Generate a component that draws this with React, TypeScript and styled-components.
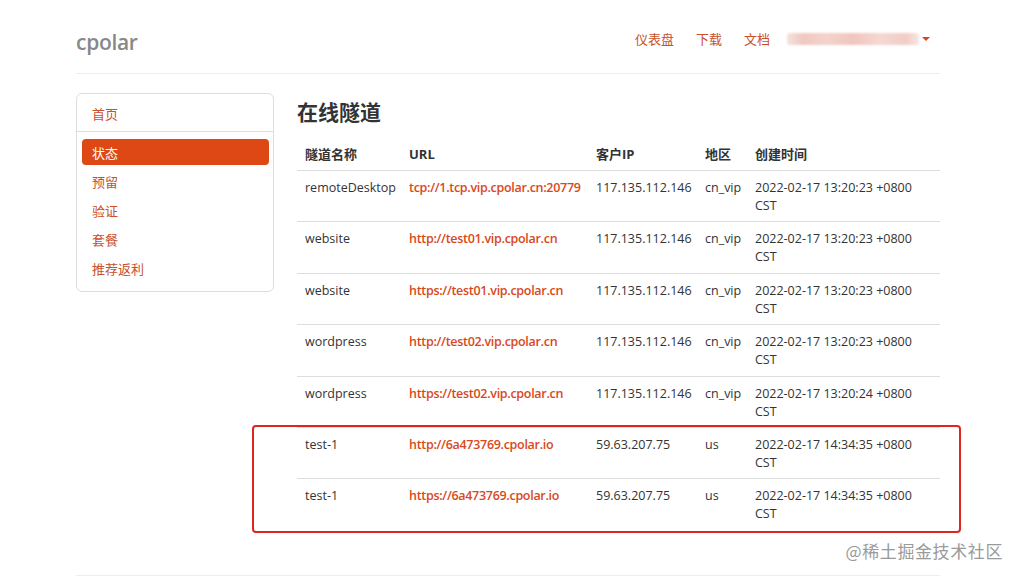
import React from "react";
import styled, { createGlobalStyle } from "styled-components";

const Global = createGlobalStyle`
  html, body { margin: 0; padding: 0; background: #fff; }
  body { font-family: "Open Sans", "Noto Sans CJK SC", sans-serif; color: #333; font-size: 13px; }
  * { box-sizing: border-box; }
`;

const Page = styled.div`
  position: relative;
  width: 1023px;
  height: 579px;
  overflow: hidden;
`;

const Container = styled.div`
  width: 864px;
  margin-left: 76px;
`;

const Header = styled.header`
  height: 74px;
  display: flex;
  align-items: center;
  justify-content: space-between;
  border-bottom: 1px solid #eee;
  padding-top: 4px;
`;

const Logo = styled.div`
  font-size: 21px;
  font-weight: 600;
  color: #888;
  letter-spacing: -0.3px;
  margin-top: 6px;
`;

const Nav = styled.nav`
  display: flex;
  align-items: center;
  margin-right: 10px;
`;

const NavLink = styled.a<{ $gap: number }>`
  color: #c8502c;
  font-size: 13px;
  text-decoration: none;
  margin-left: ${(p) => p.$gap}px;
`;

const UserBlur = styled.span`
  display: inline-block;
  margin-left: 17px;
  width: 132px;
  height: 12px;
  background: linear-gradient(90deg, #f6e2de 0%, #f0c8c0 12%, #f3d3cc 30%, #f0c6be 50%, #f5d8d2 70%, #f1cdc6 90%, #f8e6e3 100%);
  filter: blur(1px);
  border-radius: 3px;
`;

const Caret = styled.span`
  display: inline-block;
  margin-left: 3px;
  width: 0;
  height: 0;
  border-left: 4px solid transparent;
  border-right: 4px solid transparent;
  border-top: 4px solid #d9481a;
`;

const Body = styled.div`
  display: flex;
  gap: 23px;
  margin-top: 19px;
`;

const Sidebar = styled.div`
  width: 198px;
  flex: none;
  align-self: flex-start;
  border: 1px solid #ddd;
  border-radius: 6px;
  padding: 6px 4px 7px 5px;
`;

const SideItem = styled.a<{ $active?: boolean }>`
  display: flex;
  align-items: center;
  height: 26px;
  padding-left: 10px;
  margin-bottom: 3px;
  border-radius: 4px;
  font-size: 13px;
  text-decoration: none;
  color: ${(p) => (p.$active ? "#fff" : "#c8502c")};
  background: ${(p) => (p.$active ? "#dd4814" : "transparent")};
`;

const SideDivider = styled.div`
  height: 1px;
  background: #ddd;
  margin: 5px -4px 7px -5px;
`;

const Main = styled.div`
  flex: 1;
`;

const Title = styled.h2`
  margin: 5px 0 11px 0;
  font-size: 21px;
  font-weight: 700;
  line-height: 28px;
  color: #333;
`;

const Table = styled.table`
  width: 643px;
  border-collapse: collapse;
  table-layout: fixed;
`;

const Th = styled.th<{ $w: number }>`
  width: ${(p) => p.$w}px;
  text-align: left;
  font-weight: 700;
  font-size: 13px;
  line-height: 18px;
  padding: 8px 8px 7px 8px;
  border-bottom: 1px solid #ddd;
  color: #333;
`;

const Td = styled.td`
  vertical-align: top;
  font-size: 12.5px;
  line-height: 18px;
  padding: 8px 8px 6.4px 8px;
  border-top: 1px solid #ddd;
  color: #333;
`;

const UrlLink = styled.a`
  color: #d9481a;
  font-weight: 600;
  letter-spacing: -0.3px;
  text-decoration: none;
  white-space: nowrap;
`;

const Highlight = styled.div`
  position: absolute;
  left: 252px;
  top: 425px;
  width: 709px;
  height: 108px;
  border: 2.5px solid #e0251b;
  border-radius: 4px;
  pointer-events: none;
`;

const Footer = styled.div`
  position: absolute;
  left: 76px;
  top: 575px;
  width: 864px;
  border-top: 1px solid #eee;
`;

const Watermark = styled.div`
  position: absolute;
  right: 20px;
  top: 538px;
  font-size: 17px;
  color: #9a9a9a;
  font-family: "Noto Sans CJK SC", sans-serif;
  letter-spacing: 0.6px;
`;

const rows = [
  ["remoteDesktop", "tcp://1.tcp.vip.cpolar.cn:20779", "117.135.112.146", "cn_vip", "2022-02-17 13:20:23 +0800"],
  ["website", "http://test01.vip.cpolar.cn", "117.135.112.146", "cn_vip", "2022-02-17 13:20:23 +0800"],
  ["website", "https://test01.vip.cpolar.cn", "117.135.112.146", "cn_vip", "2022-02-17 13:20:23 +0800"],
  ["wordpress", "http://test02.vip.cpolar.cn", "117.135.112.146", "cn_vip", "2022-02-17 13:20:23 +0800"],
  ["wordpress", "https://test02.vip.cpolar.cn", "117.135.112.146", "cn_vip", "2022-02-17 13:20:24 +0800"],
  ["test-1", "http://6a473769.cpolar.io", "59.63.207.75", "us", "2022-02-17 14:34:35 +0800"],
  ["test-1", "https://6a473769.cpolar.io", "59.63.207.75", "us", "2022-02-17 14:34:35 +0800"],
];

export default function App() {
  return (
    <Page>
      <Global />
      <Container>
        <Header>
          <Logo>cpolar</Logo>
          <Nav>
            <NavLink $gap={0}>仪表盘</NavLink>
            <NavLink $gap={22}>下载</NavLink>
            <NavLink $gap={22}>文档</NavLink>
            <UserBlur />
            <Caret />
          </Nav>
        </Header>
        <Body>
          <Sidebar>
            <SideItem>首页</SideItem>
            <SideDivider />
            <SideItem $active>状态</SideItem>
            <SideItem>预留</SideItem>
            <SideItem>验证</SideItem>
            <SideItem>套餐</SideItem>
            <SideItem>推荐返利</SideItem>
          </Sidebar>
          <Main>
            <Title>在线隧道</Title>
            <Table>
              <thead>
                <tr>
                  <Th $w={104}>隧道名称</Th>
                  <Th $w={187}>URL</Th>
                  <Th $w={109}>客户IP</Th>
                  <Th $w={50}>地区</Th>
                  <Th $w={193}>创建时间</Th>
                </tr>
              </thead>
              <tbody>
                {rows.map((r, i) => (
                  <tr key={i}>
                    <Td>{r[0]}</Td>
                    <Td>
                      <UrlLink>{r[1]}</UrlLink>
                    </Td>
                    <Td>{r[2]}</Td>
                    <Td>{r[3]}</Td>
                    <Td>
                      {r[4]}
                      <br />
                      CST
                    </Td>
                  </tr>
                ))}
              </tbody>
            </Table>
          </Main>
        </Body>
      </Container>
      <Highlight />
      <Footer />
      <Watermark>@稀土掘金技术社区</Watermark>
    </Page>
  );
}
